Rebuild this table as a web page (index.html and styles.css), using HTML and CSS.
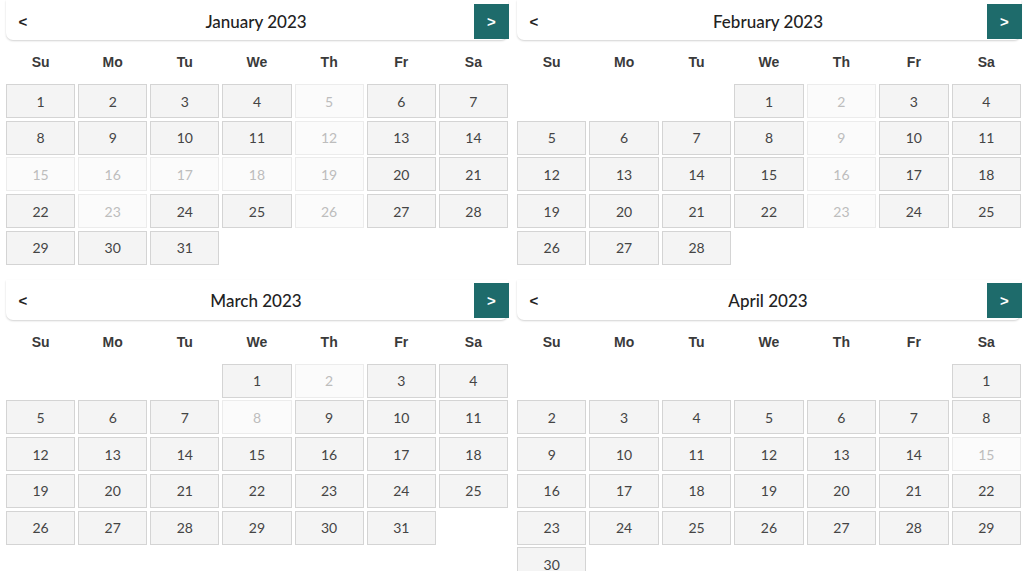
FILE: index.html
```html
<!DOCTYPE html>
<html>
<head>
<meta charset="utf-8">
<link rel="stylesheet" href="styles.css">
</head>
<body>
<div class="page">
  <section class="cal">
    <div class="head"><button class="prev">&lt;</button><div class="title">January 2023</div><button class="next">&gt;</button></div>
    <div class="wk"><span>Su</span><span>Mo</span><span>Tu</span><span>We</span><span>Th</span><span>Fr</span><span>Sa</span></div>
    <div class="days">
      <div class="d">1</div><div class="d">2</div><div class="d">3</div><div class="d">4</div><div class="d off">5</div><div class="d">6</div><div class="d">7</div>
      <div class="d">8</div><div class="d">9</div><div class="d">10</div><div class="d">11</div><div class="d off">12</div><div class="d">13</div><div class="d">14</div>
      <div class="d off">15</div><div class="d off">16</div><div class="d off">17</div><div class="d off">18</div><div class="d off">19</div><div class="d">20</div><div class="d">21</div>
      <div class="d">22</div><div class="d off">23</div><div class="d">24</div><div class="d">25</div><div class="d off">26</div><div class="d">27</div><div class="d">28</div>
      <div class="d">29</div><div class="d">30</div><div class="d">31</div>
    </div>
  </section>
  <section class="cal">
    <div class="head"><button class="prev">&lt;</button><div class="title">February 2023</div><button class="next">&gt;</button></div>
    <div class="wk"><span>Su</span><span>Mo</span><span>Tu</span><span>We</span><span>Th</span><span>Fr</span><span>Sa</span></div>
    <div class="days">
      <div class="e"></div><div class="e"></div><div class="e"></div><div class="d">1</div><div class="d off">2</div><div class="d">3</div><div class="d">4</div>
      <div class="d">5</div><div class="d">6</div><div class="d">7</div><div class="d">8</div><div class="d off">9</div><div class="d">10</div><div class="d">11</div>
      <div class="d">12</div><div class="d">13</div><div class="d">14</div><div class="d">15</div><div class="d off">16</div><div class="d">17</div><div class="d">18</div>
      <div class="d">19</div><div class="d">20</div><div class="d">21</div><div class="d">22</div><div class="d off">23</div><div class="d">24</div><div class="d">25</div>
      <div class="d">26</div><div class="d">27</div><div class="d">28</div>
    </div>
  </section>
  <section class="cal">
    <div class="head"><button class="prev">&lt;</button><div class="title">March 2023</div><button class="next">&gt;</button></div>
    <div class="wk"><span>Su</span><span>Mo</span><span>Tu</span><span>We</span><span>Th</span><span>Fr</span><span>Sa</span></div>
    <div class="days">
      <div class="e"></div><div class="e"></div><div class="e"></div><div class="d">1</div><div class="d off">2</div><div class="d">3</div><div class="d">4</div>
      <div class="d">5</div><div class="d">6</div><div class="d">7</div><div class="d off">8</div><div class="d">9</div><div class="d">10</div><div class="d">11</div>
      <div class="d">12</div><div class="d">13</div><div class="d">14</div><div class="d">15</div><div class="d">16</div><div class="d">17</div><div class="d">18</div>
      <div class="d">19</div><div class="d">20</div><div class="d">21</div><div class="d">22</div><div class="d">23</div><div class="d">24</div><div class="d">25</div>
      <div class="d">26</div><div class="d">27</div><div class="d">28</div><div class="d">29</div><div class="d">30</div><div class="d">31</div>
    </div>
  </section>
  <section class="cal">
    <div class="head"><button class="prev">&lt;</button><div class="title">April 2023</div><button class="next">&gt;</button></div>
    <div class="wk"><span>Su</span><span>Mo</span><span>Tu</span><span>We</span><span>Th</span><span>Fr</span><span>Sa</span></div>
    <div class="days">
      <div class="e"></div><div class="e"></div><div class="e"></div><div class="e"></div><div class="e"></div><div class="e"></div><div class="d">1</div>
      <div class="d">2</div><div class="d">3</div><div class="d">4</div><div class="d">5</div><div class="d">6</div><div class="d">7</div><div class="d">8</div>
      <div class="d">9</div><div class="d">10</div><div class="d">11</div><div class="d">12</div><div class="d">13</div><div class="d">14</div><div class="d off">15</div>
      <div class="d">16</div><div class="d">17</div><div class="d">18</div><div class="d">19</div><div class="d">20</div><div class="d">21</div><div class="d">22</div>
      <div class="d">23</div><div class="d">24</div><div class="d">25</div><div class="d">26</div><div class="d">27</div><div class="d">28</div><div class="d">29</div>
      <div class="d">30</div>
    </div>
  </section>
</div>
</body>
</html>
```
FILE: styles.css
```css
* { box-sizing: border-box; }
html, body { margin: 0; padding: 0; background: #fff; }
body { overflow: hidden; font-family: "Lato", "Liberation Sans", sans-serif; color: #333; }
.page {
  display: grid;
  grid-template-columns: 502px 504px;
  column-gap: 9px;
  row-gap: 15px;
  padding-left: 6px;
}
.cal { display: flex; flex-direction: column; }
.head {
  height: 40px;
  display: flex;
  align-items: center;
  background: #fff;
  border-radius: 0 0 7px 7px;
  box-shadow: 0 1px 2px rgba(0,0,0,0.18);
  padding-top: 2px;
}
.prev, .next {
  border: 0;
  padding: 0;
  font-family: "Liberation Sans", sans-serif;
  font-weight: 700;
  font-size: 15px;
  cursor: pointer;
}
.prev { width: 34px; height: 34px; background: transparent; color: #222; }
.next {
  width: 35px; height: 35px;
  background: #1e6b6b;
  color: #fff;
  margin-right: -1px;
}
.title {
  flex: 1;
  text-align: center;
  font-size: 17px;
  font-weight: 500;
  color: #222;
  padding-right: 2px;
}
.wk {
  height: 43px;
  display: grid;
  grid-template-columns: repeat(7, 1fr);
  column-gap: 3px;
  align-items: center;
  text-align: center;
  font-family: "Liberation Sans", sans-serif;
  font-weight: 700;
  font-size: 14px;
  color: #3a3a3a;
  padding-top: 1px;
}
.days {
  display: grid;
  grid-template-columns: repeat(7, 1fr);
  column-gap: 3px;
  row-gap: 2.7px;
  padding-top: 1px;
}
.d {
  height: 34px;
  display: flex;
  align-items: center;
  justify-content: center;
  background: #f4f4f4;
  border: 1px solid #d4d4d4;
  font-size: 14px;
  color: #444;
}
.d.off {
  background: #fbfbfb;
  border-color: #ececec;
  color: #bdbdbd;
}
.e { height: 34px; }
```
